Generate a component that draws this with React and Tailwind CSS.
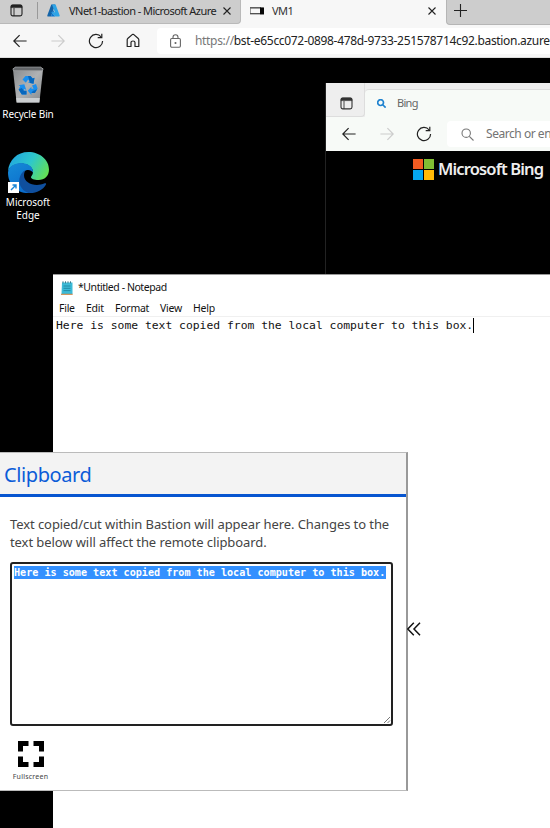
import React from "react";

const TabMenuIcon = ({ className }) => (
  <svg className={className} viewBox="0 0 13 13" fill="none">
    <rect x="1" y="1.1" width="11" height="10.8" rx="1.8" stroke="currentColor" strokeWidth="1.1" />
    <path d="M1 3.6V2.5Q1 1 2.5 1h8Q12 1 12 2.5v1.1Z" fill="currentColor" stroke="currentColor" strokeWidth=".6" />
    <path d="M4 4v8" stroke="currentColor" strokeWidth=".9" />
  </svg>
);

const Arrow = ({ className }) => (
  <svg className={className} viewBox="0 0 14 14" fill="none" stroke="currentColor" strokeWidth="1.2">
    <path d="M13.6 7H.8M6.6 1.2.8 7l5.8 5.8" />
  </svg>
);

const Refresh = ({ className }) => (
  <svg className={className} viewBox="0 0 16 16" fill="none" stroke="currentColor" strokeWidth="1.2">
    <path d="M13.2 4A6.6 6.6 0 1 0 14.6 8" />
    <path d="M13.8.8v3.8H9.7" />
  </svg>
);

const Close = ({ className }) => (
  <svg className={className} viewBox="0 0 8 8" fill="none" stroke="#222" strokeWidth="1.1">
    <path d="m.5.5 7 7M7.5.5l-7 7" />
  </svg>
);

const Search = ({ className, width }) => (
  <svg className={className} viewBox="0 0 13 13" fill="none" stroke="currentColor" strokeWidth={width}>
    <circle cx="5.2" cy="5.2" r="4.2" />
    <path d="m8.3 8.3 4.2 4.2" />
  </svg>
);

function BrowserChrome() {
  return (
    <header className="h-[58px] border-b border-[#ddd] bg-[#f7f7f7]">
      <div className="flex h-[24px] items-start bg-[#f7f7f7]">
        <div className="flex h-[24px] w-[241px] items-center rounded-br-[4px] border-r border-b border-[#b9b9b9] bg-[#cdcdcd] pb-[2px]">
          <TabMenuIcon className="ml-[10px] size-[13px] shrink-0 text-[#222]" />
          <span className="ml-[14px] h-[17px] w-px shrink-0 bg-[#999]" />
          <svg className="ml-[9px] h-[13px] w-[13px] shrink-0" viewBox="0 0 13 13">
            <path d="M4.3.5h3.9L4 12.4H.9Q0 12.3.3 11.4Z" fill="#1464a8" />
            <path d="M5 .5h3.6l4.1 11q.2.9-.7.9H8.6L3.7 8.2h4.2Z" fill="#2da4e6" />
            <path d="M7.3 8.2H3.8l4.7 4.2H4L6.1 6Z" fill="#0877d3" />
          </svg>
          <span className="ml-[9px] w-[154px] shrink-0 text-[11px] leading-[16px] tracking-[-0.54px] whitespace-nowrap text-[#222]">VNet1-bastion - Microsoft Azure</span>
          <Close className="size-[8px] shrink-0" />
        </div>
        <div className="flex h-[24px] w-[205px] items-center pb-[2px]">
          <svg className="ml-[9px] h-[8px] w-[14px]" viewBox="0 0 14 8">
            <rect x=".5" y="1" width="12.5" height="5.5" fill="#f7f7f7" stroke="#999" />
            <path d="M0 .8h11M0 6.8h14" stroke="#333" />
            <path d="M10 .5h4v6.8h-4z" fill="#080808" />
          </svg>
          <span className="ml-[8px] w-[156px] text-[11px] leading-[16px] tracking-[-0.5px] text-[#333]">VM1</span>
          <Close className="size-[8px]" />
        </div>
        <div className="flex h-[25px] flex-1 items-center rounded-bl-[4px] border-b border-l border-[#b5b5b5] bg-[#cdcdcd] pb-[3px] pl-[7px]">
          <svg className="size-[13px]" viewBox="0 0 13 13" stroke="#222" strokeWidth="1.1">
            <path d="M6.5 0v13M0 6.5h13" />
          </svg>
        </div>
      </div>
      <div className="flex h-[33px] items-center text-[#222]">
        <Arrow className="ml-[13px] size-[14px]" />
        <Arrow className="ml-[24px] size-[14px] rotate-180 text-[#ccc]" />
        <Refresh className="ml-[23px] size-[16px]" />
        <svg className="ml-[22px] h-[15px] w-[14px]" viewBox="0 0 14 15" fill="none" stroke="currentColor" strokeWidth="1.2">
          <path d="M1.2 6.8Q1.2 6 2 5.3L6.2 1.6Q7 1 7.8 1.6L12 5.3q.8.7.8 1.5v6.7H9V9.5Q9 8 7 8T5 9.5v4H1.2Z" strokeLinejoin="round" />
        </svg>
        <div className="ml-[17px] flex h-[26px] flex-1 items-center rounded-l-[4px] bg-white">
          <svg className="ml-[13px] h-[14px] w-[11px] shrink-0" viewBox="0 0 11 14" fill="none" stroke="#666" strokeWidth="1.1">
            <rect x=".6" y="4.5" width="9.8" height="8.8" rx="1.2" />
            <path d="M3 4.5V3.3a2.5 2.5 0 0 1 5 0v1.2" />
            <circle cx="5.5" cy="9" r=".5" fill="#666" />
          </svg>
          <span className="ml-[14px] text-[12px] leading-[18px] tracking-[-0.32px] whitespace-nowrap text-[#222]">
            <span className="text-[#777]">https://</span>bst-e65cc072-0898-478d-9733-251578714c92.bastion.azure
          </span>
        </div>
      </div>
    </header>
  );
}

function DesktopIcons() {
  return (
    <div className="flex w-[56px] flex-col items-center pt-[8px] text-white">
      <svg className="h-[38px] w-[32px]" viewBox="0 0 32 38">
        <defs>
          <linearGradient id="bin" x1="0" y1="0" x2="1" y2="1">
            <stop stopColor="#85888b" /><stop offset=".5" stopColor="#b0b2b4" /><stop offset="1" stopColor="#84878a" />
          </linearGradient>
        </defs>
        <path d="m.8 2 3.8 34.5h22.8L31.2 2Z" fill="url(#bin)" />
        <path d="M1 3.5 3 1h26l2 2.5-.5 1.2h-29Z" fill="#64676a" stroke="#a9adaf" strokeWidth=".6" />
        <path d="M4.2 32h23.6l-.5 4.5H4.7Z" fill="#cbced0" />
        <g fill="#1b8fee">
          <path d="m10.5 13.500 3-3.500h5l2.200 2.500 1.800-.8-1 6-5.500-1.200 1.700-1.300-1.600-1.700-2.300 3.200Z" />
          <path d="m20 19.500 4-1.500 1.600 4.500-2.700 4.500h-3.500v2l-3.600-4.200 3.600-4v2h2.200Z" />
          <path d="m6.500 19.300 5.800-1 2 5.600-2-.8-.8 1.600h3V28.500H9.800l-3.200-5 1.600-3.300Z" />
        </g>
        <path d="m16 10h2.500l2.200 2.500 1.800-.8-1 6-3.500-.8ZM20.800 25l4.300-1.700-2.200 3.700h-3.500ZM6.600 23.500l3.200-1.500 2 2.700h2.700v3.800H9.800Z" fill="#0867bd" />
      </svg>
      <span className="mt-[3px] text-[10px] leading-[14px] tracking-[-0.12px] whitespace-nowrap">Recycle Bin</span>
      <div className="mt-[30px] ml-px h-[43px] w-[43px]">
        <svg className="size-[43px]" viewBox="0 0 43 43">
          <defs>
            <linearGradient id="edgeTop" x1="0" y1=".3" x2="1" y2=".7">
              <stop stopColor="#21a6df" /><stop offset=".5" stopColor="#2ec8cb" /><stop offset="1" stopColor="#65e052" />
            </linearGradient>
            <linearGradient id="edgeLeft" x1="0" y1="0" x2=".5" y2="1">
              <stop stopColor="#168bd7" /><stop offset="1" stopColor="#0b6dcc" />
            </linearGradient>
          </defs>
          <path d="M1 20C2 9 10 1 21.500 1 33 1 42 9 42 18.500 42 25 37.500 29 31.500 29c-4.500 0-7.500-1.300-7.500-2.800 0-1.200 2-2.200 2-5.200 0-5-6-8.500-11.500-8.500C8 12.500 3 15.500 1 20Z" fill="url(#edgeTop)" />
          <path d="M1 21.500c.5-6 6.500-9.500 13-9.500 7 0 12 4 12 8.500v1c-2-3-6.500-3.500-9.500-.5-4 4-3.500 11.500 0 16 2 2.600 4.500 4 6.500 5C10 43 1 33.500 1 21.500Z" fill="url(#edgeLeft)" />
          <path d="M18.500 19C11.500 23 10.500 32 15 37.500c2 2.600 4.600 4.100 7.200 4.500 7.300.3 13.500-2.800 16.800-8.500.5-1-.3-1.700-1.300-1.200C28 36.500 17 32 17 24.500c0-2 .7-4 1.500-5.500Z" fill="#0f4f9e" />
          <path d="M1 31h11v11H1z" fill="#fff" />
          <path d="m4 39 5-5M5.500 34H9v3.500" stroke="#1484d7" strokeWidth="1.4" fill="none" />
        </svg>
      </div>
      <span className="mt-[2px] text-center text-[10px] leading-[13px]">Microsoft<br />Edge</span>
    </div>
  );
}

function BingWindow() {
  return (
    <section className="absolute top-[25px] left-[325px] h-[191px] w-[225px] border-l border-[#222] bg-black">
      <div className="flex h-[34px] items-end bg-[#eee]">
        <div className="flex h-[34px] w-[39px] items-center rounded-br-[4px] border-r border-b border-[#ddd] pt-[7px] pl-[14px]">
          <TabMenuIcon className="size-[13px] text-[#333]" />
        </div>
        <div className="flex h-[28px] flex-1 items-center rounded-tl-[4px] border-t border-[#ddd] bg-[#f7faf7] pl-[12px]">
          <Search className="size-[9px] text-[#1f82cf]" width="2.4" />
          <span className="ml-[11px] text-[11px] tracking-[-0.7px] text-[#666]">Bing</span>
        </div>
      </div>
      <div className="flex h-[34px] items-center bg-[#f7faf7] text-[#222]">
        <Arrow className="ml-[16px] size-[14px] shrink-0" />
        <Arrow className="ml-[24px] size-[14px] shrink-0 rotate-180 text-[#ccc]" />
        <Refresh className="ml-[22px] size-[16px] shrink-0" />
        <div className="ml-[15px] flex h-[26px] flex-1 items-center rounded-l-[4px] bg-white">
          <Search className="ml-[14px] size-[13px] shrink-0 text-[#777]" width="1.1" />
          <span className="ml-[12px] text-[12px] tracking-[-0.46px] whitespace-nowrap text-[#737373]">Search or en</span>
        </div>
      </div>
      <div className="mt-[6px] ml-[87px] flex h-[24px] items-center">
        <div className="grid grid-cols-2 gap-px">
          <i className="size-[10px] bg-[#f25c22]" /><i className="size-[10px] bg-[#80bd33]" />
          <i className="size-[10px] bg-[#05a6ef]" /><i className="size-[10px] bg-[#ffba08]" />
        </div>
        <span className="ml-[4px] text-[16.5px] leading-[22px] font-semibold tracking-[-0.85px] whitespace-nowrap text-[#eee]">Microsoft Bing</span>
      </div>
    </section>
  );
}

function Notepad() {
  return (
    <section className="absolute top-[216px] left-[53px] h-[554px] w-[497px] border-t border-[#999] bg-white text-[#111]">
      <div className="flex h-[25px] items-center">
        <svg className="ml-[8px] h-[14px] w-[12px]" viewBox="0 0 12 14">
          <path d="M1 1.500h10.500V13H.5Z" fill="#3cbbd8" />
          <path d="M2 .3v2M4.500 .3v2M7 .3v2M9.500 .3v2" stroke="#2b6f82" strokeWidth=".9" />
          <path d="M2.500 5h7M2.500 7.300h7M2.500 9.600h7" stroke="#1b7f9b" strokeWidth=".8" />
          <path d="M0 13.300h11.700" stroke="#c67d3b" />
        </svg>
        <span className="ml-[5px] text-[10.5px] tracking-[-0.44px]">*Untitled - Notepad</span>
      </div>
      <nav className="flex h-[17px] items-center border-b border-[#f0f0f0] pt-px text-[10.5px] tracking-[-0.25px]">
        <span className="ml-[6px] w-[27px]">File</span><span className="w-[29px]">Edit</span>
        <span className="w-[45px]">Format</span><span className="w-[33px]">View</span><span>Help</span>
      </nav>
      <div className="flex h-[17px] items-center pl-[3px] font-['DejaVu_Sans_Mono',monospace] text-[11.36px] whitespace-pre">
        <span>Here is some text copied from the local computer to this box.</span><span className="h-[15px] w-px bg-black" />
      </div>
    </section>
  );
}

function Clipboard() {
  return (
    <aside className="absolute top-[394px] left-0 h-[339px] w-[408px] border-t border-r-2 border-b border-t-[#bbb] border-r-[#999] border-b-[#bbb] bg-white">
      <h1 className="h-[44px] border-b-[3px] border-[#0755d0] bg-[#f3f3f3] pl-[4px] text-[20px] leading-[44px] tracking-[-0.4px] text-[#0b5cd8]">Clipboard</h1>
      <p className="mt-[18px] ml-[10px] text-[13px] leading-[18px] tracking-[-0.08px] whitespace-nowrap text-[#444]">
        Text copied/cut within Bastion will appear here. Changes to the<br />text below will affect the remote clipboard.
      </p>
      <div className="mt-[11px] ml-[10px] flex h-[164px] w-[383px] flex-col justify-between rounded-[3px] border-2 border-[#222] pt-[2px] pl-[2px]">
        <span className="h-[13px] w-[372px] bg-[#3390ff] font-['DejaVu_Sans_Mono',monospace] text-[10.12px] leading-[13px] font-bold whitespace-pre text-white">Here is some text copied from the local computer to this box.</span>
        <svg className="size-[8px] self-end" viewBox="0 0 8 8" stroke="#555" strokeWidth=".8"><path d="m1 7 6-6M4.500 7 7 4.500" /></svg>
      </div>
      <div className="mt-[15px] ml-[12px] flex w-[37px] flex-col items-center">
        <svg className="h-[26px] w-[26px]" viewBox="0 0 26 26" fill="none" stroke="#000" strokeWidth="5">
          <path d="M2.500 10.500v-8h8M15.500 2.500h8v8M23.500 15.500v8h-8M10.500 23.500h-8v-8" />
        </svg>
        <span className="mt-[5px] text-[7px] leading-[10px] tracking-[0.22px] text-[#444]">Fullscreen</span>
      </div>
    </aside>
  );
}

export default function App() {
  return (
    <div className="h-[828px] w-[550px] overflow-hidden bg-black font-['Noto_Sans',sans-serif]">
      <BrowserChrome />
      <main className="relative h-[770px]">
        <DesktopIcons />
        <BingWindow />
        <Notepad />
        <Clipboard />
        <svg className="absolute top-[564px] left-[407px] h-[14px] w-[14px]" viewBox="0 0 14 14" fill="none" stroke="#111" strokeWidth="1.5">
          <path d="M6.800.8.800 7l6 6.200M13 .8 7 7l6 6.200" />
        </svg>
      </main>
    </div>
  );
}
